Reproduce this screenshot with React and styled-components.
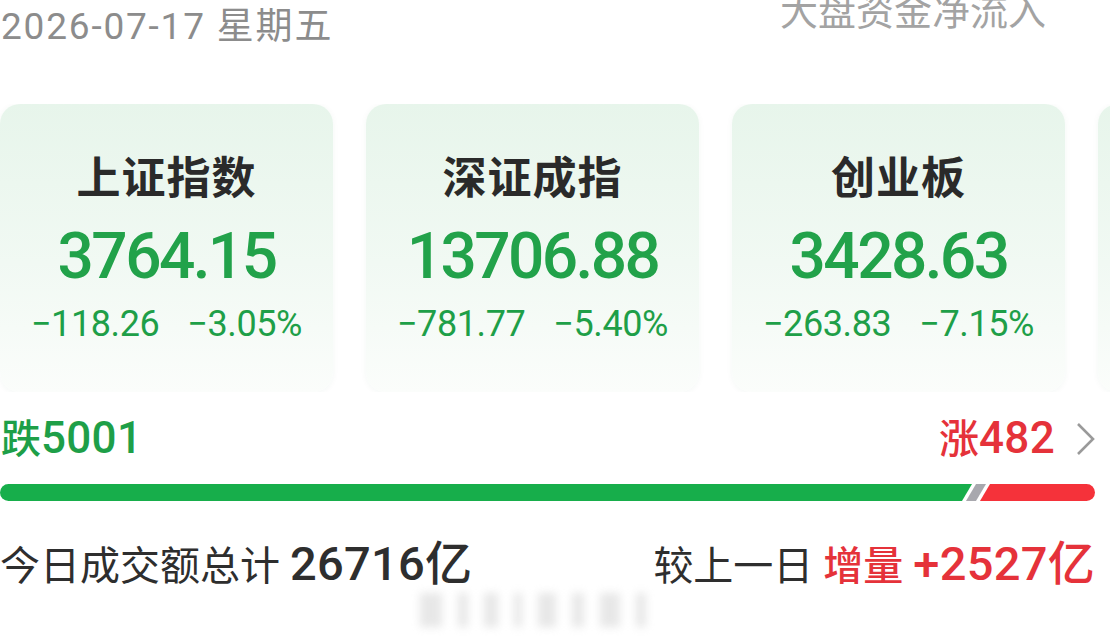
import React from 'react'
import styled, { createGlobalStyle } from 'styled-components'

const GlobalStyle = createGlobalStyle`
  html, body {
    margin: 0;
    padding: 0;
    background: #fff;
    overflow: hidden;
  }
  body {
    font-family: Roboto, "Noto Sans CJK SC", sans-serif;
  }
`

const GREEN = '#1e9f48'
const RED = '#e5323a'

const Page = styled.div`
  width: 1110px;
  height: 642px;
  overflow: hidden;
  padding: 0 15px 0 0;
  box-sizing: border-box;
`

const Header = styled.div`
  display: flex;
  justify-content: space-between;
  align-items: flex-start;
  height: 104px;
`

const DateLabel = styled.div`
  margin: 8px 0 0 1px;
  font-size: 37px;
  line-height: 37px;
  color: #8c8c8c;
  letter-spacing: 1.8px;
`

const FlowLabel = styled.div`
  margin: -7px 49px 0 0;
  font-size: 38px;
  line-height: 38px;
  color: #a3a3a3;
`

const CardRow = styled.div`
  display: flex;
  gap: 33px;
  width: 1110px;
  overflow: hidden;
`

const Card = styled.div`
  flex: 0 0 333px;
  height: 288px;
  border-radius: 20px;
  background: linear-gradient(180deg, #e7f5eb 0%, #f1f9f3 55%, #fbfdfb 100%);
  box-shadow: 0 1px 6px rgba(40, 90, 60, 0.05);
  display: flex;
  flex-direction: column;
  align-items: center;
  padding-top: 53px;
  box-sizing: border-box;
  white-space: nowrap;
`

const CardTitle = styled.div`
  font-size: 44px;
  line-height: 44px;
  font-weight: 700;
  color: #2a2a2a;
  letter-spacing: 1px;
`

const CardValue = styled.div`
  margin-top: 24px;
  font-size: 64px;
  line-height: 64px;
  font-weight: 500;
  color: #22a24a;
  letter-spacing: -2.6px;
`

const CardChange = styled.div`
  margin-top: 17px;
  display: flex;
  gap: 28px;
  font-size: 36px;
  line-height: 36px;
  color: ${GREEN};
  letter-spacing: -0.4px;
`

const StatRow = styled.div`
  margin-top: 26px;
  display: flex;
  justify-content: space-between;
  align-items: center;
  height: 42px;
`

const Count = styled.div`
  display: flex;
  align-items: baseline;
  font-size: 40px;
  line-height: 42px;
  font-weight: 500;
  color: ${p => p.$color};
  margin-left: ${p => (p.$left ? '1px' : '0')};
`

const Digits = styled.span`
  font-size: ${p => p.$size || 44}px;
  letter-spacing: 0.3px;
`

const RightGroup = styled.div`
  display: flex;
  align-items: center;
  gap: 20px;
`

const Bar = styled.div`
  margin-top: 24px;
  display: flex;
  height: 17px;
`

const FallPart = styled.div`
  flex: 1;
  background: #17ae4b;
  border-radius: 9px 0 0 9px;
  clip-path: polygon(0 0, 100% 0, calc(100% - 10px) 100%, 0 100%);
`

const FlatPart = styled.div`
  flex: 0 0 20px;
  margin-left: -6px;
  background: #a8a8ae;
  clip-path: polygon(10px 0, 20px 0, 10px 100%, 0 100%);
`

const RisePart = styled.div`
  flex: 0 0 ${p => p.$width}px;
  margin-left: -6px;
  background: #f5323a;
  border-radius: 0 9px 9px 0;
  clip-path: polygon(10px 0, 100% 0, 100% 100%, 0 100%);
`

const Summary = styled.div`
  margin-top: 41px;
  display: flex;
  justify-content: space-between;
  align-items: baseline;
  font-size: 40px;
  line-height: 44px;
  color: #2e2e2e;
  white-space: pre;
`

const Strong = styled.span`
  font-weight: 500;
  color: ${p => p.$color || 'inherit'};
`

const Ghost = styled.div`
  margin: 4px 0 0 420px;
  display: flex;
  gap: 16px;
  filter: blur(4px);
  opacity: 0.35;
`

const GhostMark = styled.span`
  width: ${p => p.$w}px;
  height: 34px;
  background: #bcbcbc;
`

const indices = [
  { name: '上证指数', value: '3764.15', diff: '−118.26', pct: '−3.05%' },
  { name: '深证成指', value: '13706.88', diff: '−781.77', pct: '−5.40%' },
  { name: '创业板', value: '3428.63', diff: '−263.83', pct: '−7.15%' },
  { name: '北证50', value: '1386.20', diff: '−92.41', pct: '−6.25%' },
]

const Chevron = () => (
  <svg width="20" height="34" viewBox="0 0 20 34">
    <path d="M3 2 L18 17 L3 32" fill="none" stroke="#9a9a9a" strokeWidth="2.6" />
  </svg>
)

export default function App() {
  return (
    <Page>
      <GlobalStyle />
      <Header>
        <DateLabel>2026-07-17 星期五</DateLabel>
        <FlowLabel>大盘资金净流入</FlowLabel>
      </Header>

      <CardRow>
        {indices.map(item => (
          <Card key={item.name}>
            <CardTitle>{item.name}</CardTitle>
            <CardValue>{item.value}</CardValue>
            <CardChange>
              <span>{item.diff}</span>
              <span>{item.pct}</span>
            </CardChange>
          </Card>
        ))}
      </CardRow>

      <StatRow>
        <Count $color={GREEN} $left>
          跌<Digits>5001</Digits>
        </Count>
        <RightGroup>
          <Count $color={RED}>
            涨<Digits>482</Digits>
          </Count>
          <Chevron />
        </RightGroup>
      </StatRow>

      <Bar>
        <FallPart />
        <FlatPart />
        <RisePart $width={115} />
      </Bar>

      <Summary>
        <div>
          今日成交额总计 <Strong><Digits $size={47}>26716亿</Digits></Strong>
        </div>
        <div>
          较上一日 <Strong $color={RED}>增量 <Digits $size={47}>+2527亿</Digits></Strong>
        </div>
      </Summary>

      <Ghost>
        <GhostMark $w={22} />
        <GhostMark $w={10} />
        <GhostMark $w={14} />
        <GhostMark $w={8} />
        <GhostMark $w={18} />
        <GhostMark $w={12} />
        <GhostMark $w={20} />
        <GhostMark $w={10} />
      </Ghost>
    </Page>
  )
}
